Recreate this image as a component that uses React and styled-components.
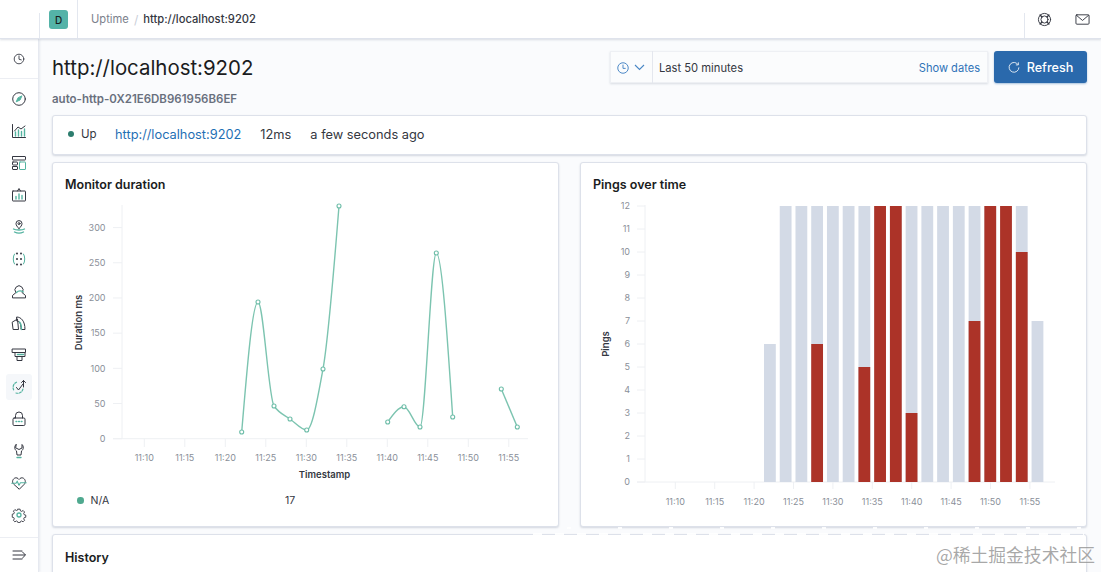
import React from "react";
import styled, { createGlobalStyle } from "styled-components";

const Global = createGlobalStyle`
  html, body { margin: 0; padding: 0; height: 100%; overflow: hidden; background: #fafbfd; }
  body { font-family: Inter, "Noto Sans", sans-serif; color: #343741; }
  #root { height: 100%; }
`;
const Page = styled.div`
  position: relative; width: 1101px; height: 572px; overflow: hidden;
  display: flex; flex-direction: column; background: #fafbfd;
`;
const TopBar = styled.header`
  flex: 0 0 39px; height: 39px; box-sizing: border-box; display: flex; align-items: stretch;
  background: #fff; border-bottom: 1px solid #dfe3ec; box-shadow: 0 1px 2px rgba(152,162,179,.35); position: relative; z-index: 2;
`;
const LogoSlot = styled.div`
  width: 39px; margin-top: 13px; border-right: 1px solid #e3e7ef;
`;
const SpaceSlot = styled.div`
  width: 38px; display: flex; justify-content: center; padding-top: 10px; box-sizing: border-box;
  border-right: 1px solid #e3e7ef;
`;
const Avatar = styled.div`
  width: 19px; height: 19px; border-radius: 3px; background: #54b3a8; color: #1a1c21;
  font-size: 10px; font-weight: 500; display: flex; align-items: center; justify-content: center;
`;
const Crumbs = styled.nav`
  flex: 1; display: flex; align-items: center; gap: 5px; padding: 0 0 1px 13px; font-size: 11.2px; height: 38px;
`;
const Crumb = styled.span`
  color: ${p => (p.$current ? "#343741" : "#7b818c")};
  font-weight: ${p => (p.$current ? 500 : 400)};
`;
const Slash = styled.span`color: #c9ced8; font-size: 12px;`;
const HeaderActions = styled.div`
  display: flex; align-items: center; width: 77px; box-sizing: border-box; border-left: 1px solid #e3e7ef;
  margin-top: 13px; height: 25px;
`;
const HeaderIcon = styled.span`
  width: 38px; display: flex; justify-content: center; margin-top: -12px; color: #343741;
`;
const Body = styled.div`flex: 1; display: flex; min-height: 0;`;
const SideNav = styled.aside`
  flex: 0 0 39px; width: 39px; box-sizing: border-box; background: #fff; border-right: 1px solid #e6e9f0;
  display: flex; flex-direction: column; align-items: center; position: relative;
  box-shadow: 1px 0 2px rgba(152,162,179,.18);
`;
const Recent = styled.div`
  width: 100%; height: 40px; flex: none; display: flex; align-items: center; justify-content: center;
  border-bottom: 1px solid #eceef3; box-sizing: border-box;
`;
const NavList = styled.div`
  flex: 1; display: flex; flex-direction: column; align-items: center; padding-top: 7px;
`;
const NavItem = styled.div`
  width: 26px; height: 26px; margin-bottom: 6px; flex: none; display: flex; align-items: center; justify-content: center;
  border-radius: 3px; background: ${p => (p.$active ? "#f5f7fa" : "transparent")};
`;
const Collapse = styled.div`
  width: 100%; height: 35px; flex: none; display: flex; align-items: center; justify-content: center;
  border-top: 1px solid #eceef3; box-sizing: border-box;
`;
const Main = styled.main`
  flex: 1; min-width: 0; padding: 12px 14px 0 13px; display: flex; flex-direction: column; overflow: hidden;
`;
const TitleRow = styled.div`display: flex; align-items: center; justify-content: space-between; height: 32px; flex: none;`;
const Title = styled.h1`margin: 0; font-size: 20.4px; font-weight: 400; color: #1a1c21;`;
const TimeControls = styled.div`display: flex; gap: 6px;`;
const DatePicker = styled.div`
  width: 378px; height: 32px; display: flex; box-sizing: border-box; background: #fbfcfd;
  box-shadow: 0 1px 2px rgba(152,162,179,.35), 0 0 0 1px #eef0f4 inset;
`;
const QuickSelect = styled.div`
  width: 43px; display: flex; align-items: center; justify-content: center; gap: 5px; border-right: 1px solid #e4e7ee; padding-top: 1px; box-sizing: border-box;
`;
const DateText = styled.div`flex: 1; display: flex; align-items: center; justify-content: space-between; padding: 1px 8px 0 6px; font-size: 11.2px;`;
const ShowDates = styled.a`color: #2f73b8; font-size: 11.1px;`;
const RefreshButton = styled.button`
  width: 93px; height: 32px; border: 0; border-radius: 3px; background: #2a69ac; color: #fff; font: 500 12.6px Inter, sans-serif;
  display: flex; align-items: center; justify-content: center; gap: 7px; padding: 0; box-shadow: 0 1px 2px rgba(42,105,172,.4);
`;
const MonitorId = styled.div`margin-top: 8px; height: 16px; line-height: 16px; font-size: 11.5px; font-weight: 600; color: #69707d; flex: none;`;
const Card = styled.section`
  background: #fff; border: 1px solid #dde1ea; border-radius: 3px; box-sizing: border-box;
  box-shadow: 0 1px 2px rgba(152,162,179,.4);
`;
const StatusCard = styled(Card)`
  margin-top: 8px; height: 40px; flex: none; display: flex; align-items: center; padding: 0 15px 2px; font-size: 12.8px; color: #343741;
`;
const Status = styled.span`display: flex; align-items: center; gap: 7px; font-size: 11.5px; width: 47px;`;
const Dot = styled.i`
  width: ${p => p.$size}px; height: ${p => p.$size}px; border-radius: 50%; background: ${p => p.$color}; display: block; flex: none;
`;
const MonitorLink = styled.a`color: #1f6fb5; margin-right: 19px;`;
const Duration = styled.span`margin-right: 19px;`;
const ChartsRow = styled.div`margin-top: 7px; display: grid; grid-template-columns: 507px 507px; justify-content: space-between; flex: none;`;
const ChartCard = styled(Card)`height: 365px; padding: 14px 12px 0; display: flex; flex-direction: column;`;
const CardTitle = styled.h2`margin: 0; font-size: 12.5px; line-height: 16px; font-weight: 600; color: #1a1c21;`;
const ChartSvg = styled.svg`display: block; margin-top: 7px; flex: none;`;
const Legend = styled.div`display: grid; grid-template-columns: 208px 1fr; align-items: center; font-size: 10.5px; font-weight: 400; color: #343741; padding: 10px 0 0 12px;`;
const LegendKey = styled.span`display: flex; align-items: center; gap: 7px;`;
const HistoryCard = styled(Card)`margin-top: 7px; height: 60px; padding: 15px 12px; flex: none;`;
const Watermark = styled.div`
  position: absolute; right: 6px; bottom: 6px; font: 17.8px/24px "Noto Sans CJK SC", sans-serif; color: rgba(110,110,110,.6);
  text-shadow: 0 0 2px #fff;
`;
const Smudge = styled.div`
  position: absolute; left: 520px; top: ${p => p.$top}px; width: 564px; height: ${p => p.$h}px;
  background: repeating-linear-gradient(90deg, transparent 0 ${p => p.$on}px, rgba(255,255,255,.92) ${p => p.$on}px ${p => p.$on + p.$off}px);
`;

const D = "#343741";
const T = "#54b3a0";
const Ico = ({ children, size = 16, vb = 16 }) => (
  <svg width={size} height={size} viewBox={`0 0 ${vb} ${vb}`} fill="none" stroke={D} strokeWidth="1" strokeLinecap="round" strokeLinejoin="round">{children}</svg>
);
const icons = {
  clock: <><circle cx="8" cy="8" r="5.5" /><path d="M8 4.5V8.3l2.6.7" /></>,
  compass: <><circle cx="8" cy="8" r="6.3" /><path d="M10.8 5.2 9 9 5.2 10.8 7 7z" stroke={T} fill={T} /></>,
  visualize: <><path d="M1.5 1.5v13h13" /><path d="M3.5 8 7 4l3 2 4-3" stroke={D} /><path d="M4.5 13V9M7.5 13V7M10.5 13V8.5M13.5 13V6" stroke={T} strokeWidth="1.4" /></>,
  dashboard: <><rect x="1.5" y="1.5" width="13" height="3.5" rx=".5" /><rect x="1.5" y="7" width="5" height="3" rx=".5" /><rect x="1.5" y="11.5" width="5" height="3" rx=".5" /><rect x="8.5" y="7" width="6" height="7.5" rx=".5" stroke={T} /></>,
  canvas: <><rect x="1.5" y="4" width="13" height="10" rx=".5" /><path d="M6.5 4 8 1.5 9.5 4" /><path d="M5 12V9.5M8 12V7M11 12V8.5" stroke={T} strokeWidth="1.4" /></>,
  maps: <><path d="M8 9.5C6.2 7.7 5 6.3 5 4.6a3 3 0 0 1 6 0C11 6.3 9.8 7.7 8 9.5z" /><circle cx="8" cy="4.6" r="1" /><path d="M2.5 10c1.5 1 3 1 5.5 1s4 0 5.5-1M3.5 13c1.5.8 3 1.2 4.5 1.2s3-.4 4.5-1.2" stroke={T} strokeWidth="1.3" /></>,
  ml: <><path d="M3.5 3C1.8 5 1.8 11 3.5 13M12.5 3c1.7 2 1.7 8 0 10" stroke={T} /><g fill={D} stroke="none"><circle cx="6" cy="2.5" r="1" /><circle cx="10" cy="2.5" r="1" /><circle cx="6" cy="8" r="1" /><circle cx="10" cy="8" r="1" /><circle cx="6" cy="13.5" r="1" /><circle cx="10" cy="13.5" r="1" /></g></>,
  infra: <><path d="M1.5 14.5V12.5L5 9.5A4 4 0 1 1 11 9.5L14.5 12.5v2z" /><path d="M5.5 9.5C8 7 10 7.5 12.5 9" stroke={T} strokeWidth="1.3" /></>,
  logs: <><path d="M1.5 7l5-3 1 10.500h-5z" /><path d="M6 2c4 0 8 4 8 12.500h-4C10 9 9 6.500 6 6z" /><path d="M8.5 7c1.500 1.500 2 4 2 7.500" stroke={T} strokeWidth="1.3" /></>,
  apm: <><path d="M1.5 2h13v3.500h-13z" /><path d="M4 5.500v4h10V6M6 9.500v4h5v-4" /><path d="M6.5 7.500h6" stroke={T} strokeWidth="1.5" /></>,
  uptime: <><path d="M5.5 3.200A5.800 5.800 0 0 0 3.300 12M5 14c3.200 1 6.500-1 7-4.200" stroke={T} strokeDasharray="2 1.400" strokeWidth="1.2" /><path d="M5.5 8.500 7.500 11 12 5" /><path d="M10.5 3.500 12.500 1.500 14.500 3.500M12.500 1.500V8" /></>,
  siem: <><rect x="2" y="7" width="12" height="7.5" rx="1.2" /><path d="M4.5 7V4.500a3.500 3.500 0 0 1 7 0V7" /><path d="M5 10.500h.8M7.600 10.500h.8M10.200 10.500h.8" stroke={T} strokeWidth="1.4" /></>,
  dev: <><path d="M5 1.500C3 3.500 3.500 6.500 5.500 8L6 12h4l.5-4C12.500 6.500 13 3.500 11 1.500V5L8 6.500 5 5z" /><path d="M6 14.500h4" stroke={T} strokeWidth="1.3" /></>,
  monitoring: <><path d="M8 14 2.500 9C-.5 5.500 4.500 0 8 4.500 11.500 0 16.500 5.500 13.500 9z" /><path d="M.8 8.200H5l1.200-2 1.800 4 1.400-2.500h5.800" stroke={T} strokeWidth="1.1" /></>,
  gear: <><path d="M6.800 1.500h2.400l.4 1.900 1.300.6 1.700-1 1.600 1.700-1 1.600.6 1.400 1.700.4v2.400l-1.700.4-.6 1.400 1 1.600-1.700 1.700-1.600-1-1.300.6-.4 1.300H6.800l-.4-1.300-1.300-.6-1.700 1-1.600-1.700 1-1.600-.6-1.400-1.700-.4V7.100l1.700-.4.6-1.400-1-1.600 1.600-1.700 1.700 1 1.300-.6z" transform="translate(.8 .8) scale(.9)" /><circle cx="8" cy="8" r="2" stroke={T} strokeWidth="1.3" /></>,
  collapse: <><path d="M2 4h9M2 8h12M2 12h9M11.500 5 14.500 8l-3 3" /></>
};
const navOrder = ["compass", "visualize", "dashboard", "canvas", "maps", "ml", "infra", "logs", "apm", "uptime", "siem", "dev", "monitoring", "gear"];

function monotonePath(pts) {
  const n = pts.length;
  if (n === 2) return `M${pts[0][0]} ${pts[0][1]}L${pts[1][0]} ${pts[1][1]}`;
  const m = [];
  const sec = [];
  for (let i = 0; i < n - 1; i++) sec.push((pts[i + 1][1] - pts[i][1]) / (pts[i + 1][0] - pts[i][0]));
  for (let i = 1; i < n - 1; i++) m[i] = sec[i - 1] * sec[i] <= 0 ? 0 : (2 * sec[i - 1] * sec[i]) / (sec[i - 1] + sec[i]);
  m[0] = (3 * sec[0] - m[1]) / 2;
  m[n - 1] = (3 * sec[n - 2] - m[n - 2]) / 2;
  let d = `M${pts[0][0]} ${pts[0][1]}`;
  for (let i = 0; i < n - 1; i++) {
    const h = (pts[i + 1][0] - pts[i][0]) / 3;
    d += `C${pts[i][0] + h} ${pts[i][1] + m[i] * h} ${pts[i + 1][0] - h} ${pts[i + 1][1] - m[i + 1] * h} ${pts[i + 1][0]} ${pts[i + 1][1]}`;
  }
  return d;
}

const times = ["11:10", "11:15", "11:20", "11:25", "11:30", "11:35", "11:40", "11:45", "11:50", "11:55"];
const AX = "#eef0f3";
const TICK = { fontFamily: "Inter, sans-serif", fontSize: 9, fill: "#8a8f99" };
const AXT = { fontFamily: "Inter, sans-serif", fontSize: 9.5, fontWeight: 600, fill: "#343741" };

const segments = [
  [[241.7, 432], [258, 302], [274, 406], [290, 419], [306.7, 430], [323, 369], [339, 206]],
  [[387.7, 422], [404, 406.7], [420, 427], [436.3, 253], [452.7, 417]],
  [[501.3, 389], [517.3, 427]]
];
function DurationChart() {
  const y0 = 438.7;
  return (
    <ChartSvg width="482" height="284" viewBox="65 200 482 284">
      <path d={`M122 205V${y0}M113 ${y0}H528`} stroke={AX} strokeWidth="1" />
      {[0, 50, 100, 150, 200, 250, 300].map(v => {
        const y = y0 - v * 0.7037;
        return <g key={v}><path d={`M113 ${y}H122`} stroke={AX} /><text x="105.5" y={y + 3.2} textAnchor="end" {...TICK}>{v}</text></g>;
      })}
      {times.map((t, i) => {
        const x = 144.3 + i * 40.5;
        return <g key={t}><path d={`M${x} ${y0}V447`} stroke={AX} /><text x={x} y="461" textAnchor="middle" {...TICK}>{t}</text></g>;
      })}
      <text transform="translate(81.5 322.5) rotate(-90)" textAnchor="middle" {...AXT}>Duration ms</text>
      <text x="324.5" y="477.5" textAnchor="middle" {...AXT}>Timestamp</text>
      {segments.map((s, i) => <path key={i} d={monotonePath(s)} fill="none" stroke="#7cc4b0" strokeWidth="1.4" />)}
      {segments.flat().map(([x, y], i) => <circle key={i} cx={x} cy={y} r="2" fill="#fff" stroke="#6dbda8" strokeWidth="1.1" />)}
    </ChartSvg>
  );
}
const bars = [[6, 0], [12, 0], [12, 0], [12, 6], [12, 0], [12, 0], [12, 5], [12, 12], [12, 12], [12, 3], [12, 0], [12, 0], [12, 0], [12, 7], [12, 12], [12, 12], [12, 10], [7, 0]];
function PingsChart() {
  const y0 = 482;
  return (
    <ChartSvg width="482" height="322" viewBox="593 200 482 322">
      <path d={`M645 205V${y0}M637 ${y0}H1055`} stroke={AX} />
      {Array.from({ length: 13 }, (_, v) => {
        const y = y0 - v * 23;
        return <g key={v}><path d={`M637 ${y}H645`} stroke={AX} /><text x="630" y={y + 3.2} textAnchor="end" {...TICK}>{v}</text></g>;
      })}
      {times.map((t, i) => {
        const x = 675.3 + i * 39.4;
        return <g key={t}><path d={`M${x} ${y0}V489`} stroke={AX} /><text x={x} y="505" textAnchor="middle" {...TICK}>{t}</text></g>;
      })}
      <text transform="translate(608.5 344) rotate(-90)" textAnchor="middle" {...AXT}>Pings</text>
      {bars.map(([total, red], i) => {
        const x = 764 + i * 15.74;
        return (
          <g key={i}>
            <rect x={x} y={y0 - total * 23} width="11.8" height={total * 23} fill="#d3dae6" />
            {red > 0 && <rect x={x} y={y0 - red * 23} width="11.8" height={red * 23} fill="#ac3328" />}
          </g>
        );
      })}
    </ChartSvg>
  );
}

export default function App() {
  return (
    <Page>
      <Global />
      <TopBar>
        <LogoSlot />
        <SpaceSlot><Avatar>D</Avatar></SpaceSlot>
        <Crumbs><Crumb>Uptime</Crumb><Slash>/</Slash><Crumb $current>http://localhost:9202</Crumb></Crumbs>
        <HeaderActions>
          <HeaderIcon>
            <Ico size={15}>
              <circle cx="8" cy="8" r="6.5" /><circle cx="8" cy="8" r="3.8" />
              <path d="M3.3 3.3 5.3 5.3M12.7 3.3 10.7 5.3M3.3 12.7 5.3 10.7M12.7 12.7 10.7 10.7" strokeWidth="1.5" />
            </Ico>
          </HeaderIcon>
          <HeaderIcon>
            <Ico size={15}><rect x="1" y="3" width="14" height="10" rx="1" /><path d="M1.5 3.5l6.5 5.5 6.5-5.5" /></Ico>
          </HeaderIcon>
        </HeaderActions>
      </TopBar>
      <Body>
        <SideNav>
          <Recent><Ico size={14}>{icons.clock}</Ico></Recent>
          <NavList>
            {navOrder.map(k => <NavItem key={k} $active={k === "uptime"}><Ico>{icons[k]}</Ico></NavItem>)}
          </NavList>
          <Collapse><Ico>{icons.collapse}</Ico></Collapse>
        </SideNav>
        <Main>
          <TitleRow>
            <Title>http://localhost:9202</Title>
            <TimeControls>
              <DatePicker>
                <QuickSelect>
                  <svg width="12" height="12" viewBox="0 0 16 16" fill="none" stroke="#4a87c5" strokeWidth="1.3"><circle cx="8" cy="8" r="7" /><path d="M8 3.5V8.5h3.5" /></svg>
                  <svg width="11" height="7" viewBox="0 0 11 7" fill="none" stroke="#4a87c5" strokeWidth="1.1"><path d="M1 1l4.5 4.5L10 1" /></svg>
                </QuickSelect>
                <DateText><span>Last 50 minutes</span><ShowDates>Show dates</ShowDates></DateText>
              </DatePicker>
              <RefreshButton>
                <svg width="12" height="12" viewBox="0 0 16 16" fill="none" stroke="#dfe8f2" strokeWidth="1.3"><path d="M13.5 5A6.5 6.5 0 1 0 14.5 8.5" /><path d="M10.5 5.2h3.3V1.8" /></svg>
                Refresh
              </RefreshButton>
            </TimeControls>
          </TitleRow>
          <MonitorId>auto-http-0X21E6DB961956B6EF</MonitorId>
          <StatusCard>
            <Status><Dot $size={6} $color="#2d7d6e" />Up</Status>
            <MonitorLink>http://localhost:9202</MonitorLink>
            <Duration>12ms</Duration>
            <span>a few seconds ago</span>
          </StatusCard>
          <ChartsRow>
            <ChartCard>
              <CardTitle>Monitor duration</CardTitle>
              <DurationChart />
              <Legend><LegendKey><Dot $size={6.5} $color="#4fa98f" />N/A</LegendKey><span>17</span></Legend>
            </ChartCard>
            <ChartCard>
              <CardTitle>Pings over time</CardTitle>
              <PingsChart />
            </ChartCard>
          </ChartsRow>
          <HistoryCard><CardTitle>History</CardTitle></HistoryCard>
        </Main>
      </Body>
      <Smudge $top={527} $h={2} $on={47} $off={4} />
      <Smudge $top={533} $h={3} $on={13} $off={9} />
      <Watermark>@稀土掘金技术社区</Watermark>
    </Page>
  );
}
